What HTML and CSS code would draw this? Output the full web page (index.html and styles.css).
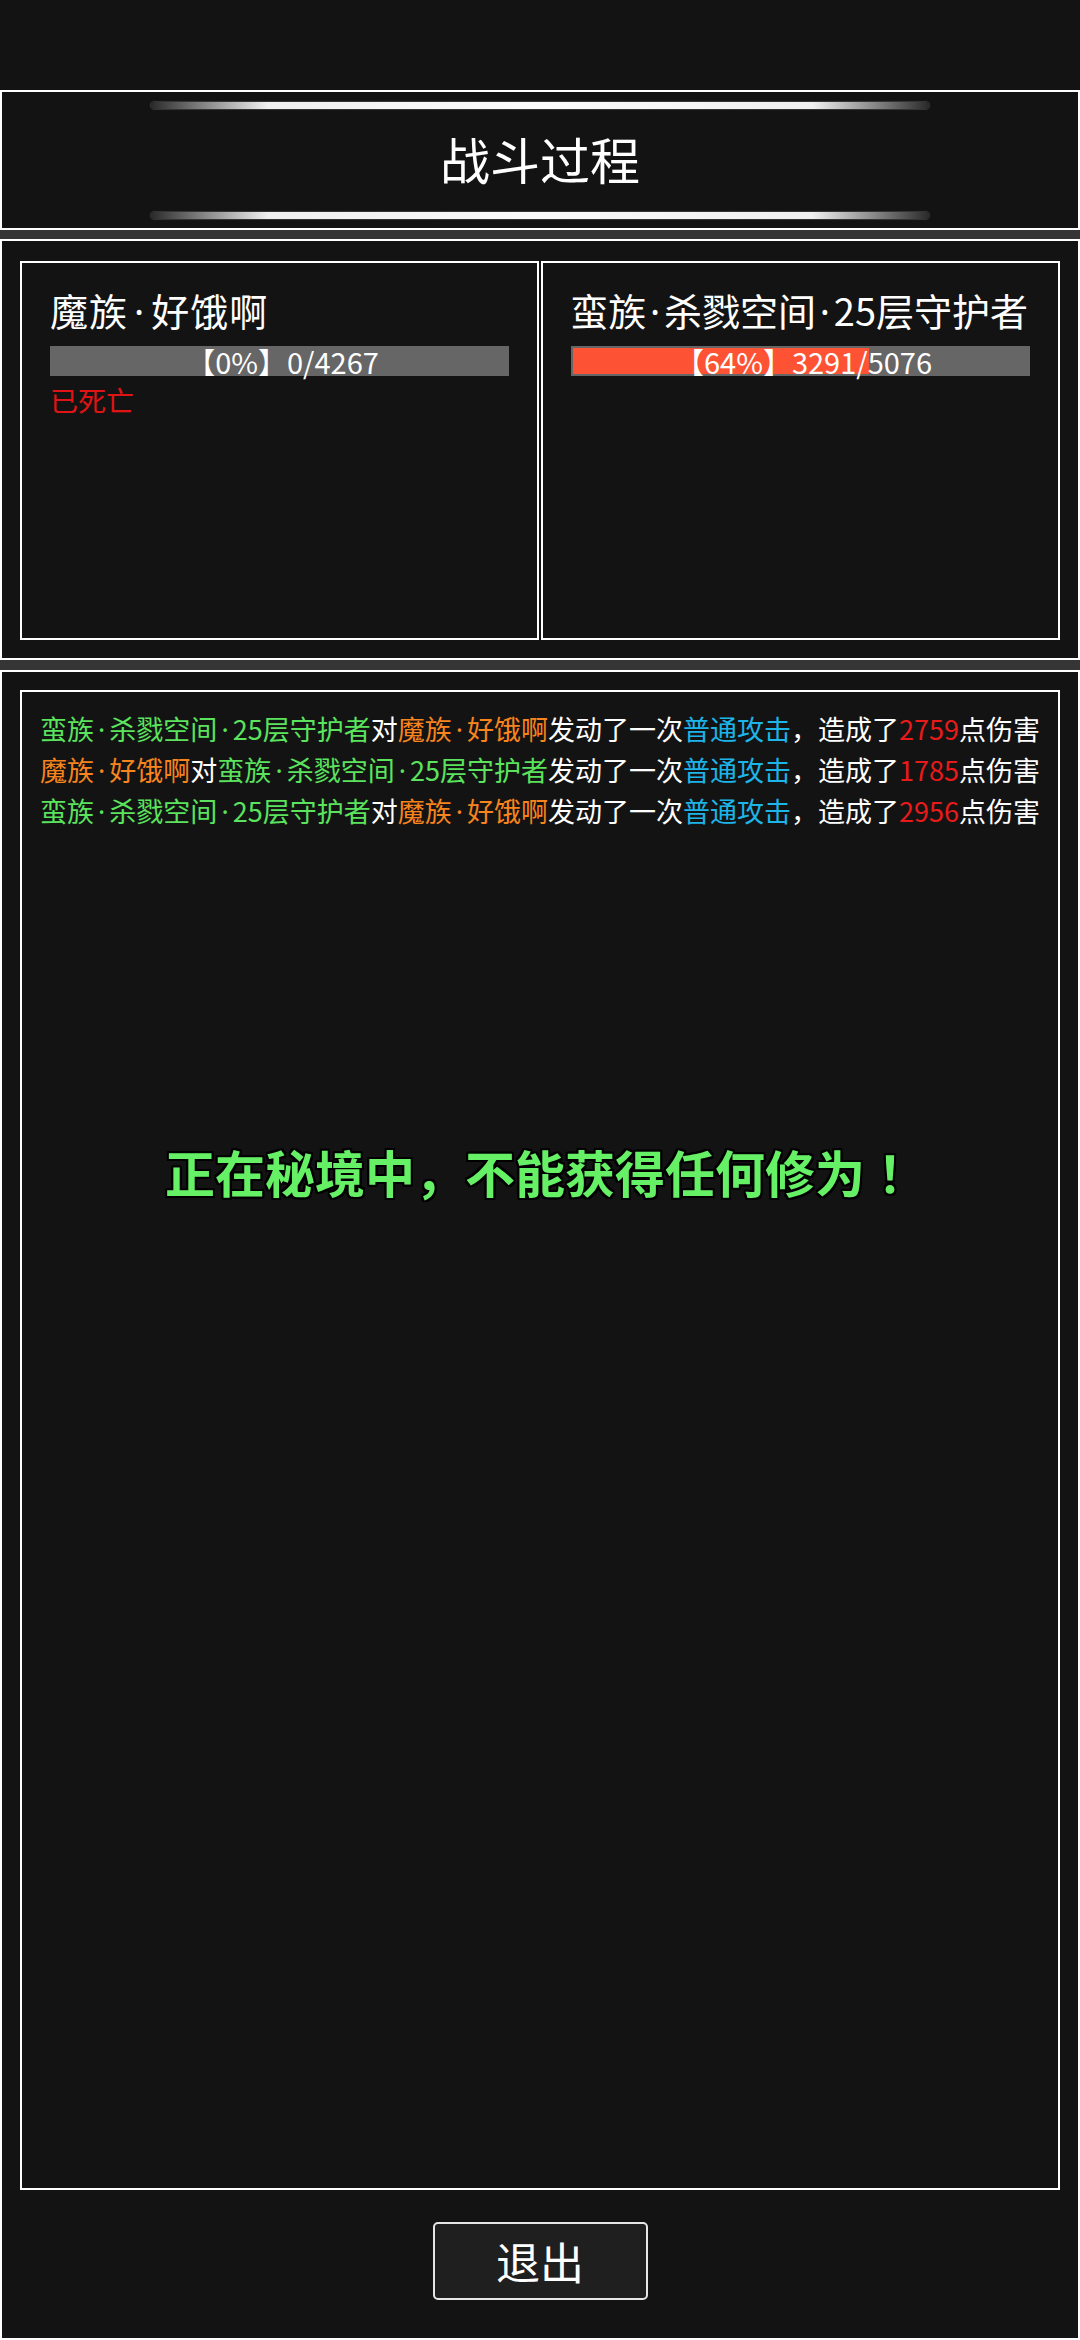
FILE: index.html
```html
<!DOCTYPE html>
<html lang="zh-CN">
<head>
<meta charset="utf-8">
<title>战斗过程</title>
<link rel="stylesheet" href="styles.css">
</head>
<body>
<div class="page">
  <div class="status"></div>

  <header class="header">
    <div class="glow"></div>
    <h1 class="title">战斗过程</h1>
    <div class="glow"></div>
  </header>

  <section class="fighters">
    <div class="fighter">
      <div class="fname self">魔族<span class="dot">·</span>好饿啊</div>
      <div class="bar">
        <div class="fill" style="width:0%"></div>
        <div class="bar-label">【0%】0/4267</div>
      </div>
      <div class="dead">已死亡</div>
    </div>
    <div class="fighter enemy">
      <div class="fname">蛮族<span class="dot">·</span>杀戮空间<span class="dot">·</span>25层守护者</div>
      <div class="bar">
        <div class="fill" style="width:64.4%"></div>
        <div class="bar-label">【64%】3291/5076</div>
      </div>
    </div>
  </section>

  <section class="battle">
    <div class="log">
      <p class="line"><span class="g">蛮族<span class="dot">·</span>杀戮空间<span class="dot">·</span>25层守护者</span>对<span class="o">魔族<span class="dot">·</span>好饿啊</span>发动了一次<span class="b">普通攻击</span>，造成了<span class="r">2759</span>点伤害</p>
      <p class="line"><span class="o">魔族<span class="dot">·</span>好饿啊</span>对<span class="g">蛮族<span class="dot">·</span>杀戮空间<span class="dot">·</span>25层守护者</span>发动了一次<span class="b">普通攻击</span>，造成了<span class="r">1785</span>点伤害</p>
      <p class="line"><span class="g">蛮族<span class="dot">·</span>杀戮空间<span class="dot">·</span>25层守护者</span>对<span class="o">魔族<span class="dot">·</span>好饿啊</span>发动了一次<span class="b">普通攻击</span>，造成了<span class="r">2956</span>点伤害</p>
    </div>
    <div class="actions">
      <button class="exit">退出</button>
    </div>
    <div class="toast">正在秘境中，不能获得任何修为<span class="bang" lang="zh-TW">！</span></div>
  </section>
</div>
</body>
</html>
```

FILE: styles.css
```css
* { box-sizing: border-box; }

html, body {
  margin: 0;
  padding: 0;
}

body {
  background: #353535;
  color: #fff;
  font-family: "Noto Sans CJK SC", "Noto Sans", sans-serif;
}

.page {
  width: 1080px;
  height: 2340px;
  display: flex;
  flex-direction: column;
  overflow: hidden;
}

.status {
  height: 90px;
  background: #131313;
  flex: none;
}

.header {
  flex: none;
  height: 140px;
  background: #131313;
  border: 2px solid #fff;
  padding: 10px 0 9px;
  display: flex;
  flex-direction: column;
  align-items: center;
  justify-content: space-between;
  margin-bottom: 9px;
}

.glow {
  width: 778px;
  height: 7px;
  border-radius: 4px;
  background: linear-gradient(to right, #2a2a2a 0%, #888 7%, #f0f0f0 15%, #fafafa 50%, #f0f0f0 85%, #888 93%, #2a2a2a 100%);
  box-shadow: 0 0 1px 1px rgba(80, 80, 80, 0.6);
}

.title {
  margin: 0 0 6px;
  font-size: 50px;
  font-weight: 400;
  line-height: 60px;
  color: #fff;
}

.dot {
  font-family: "Noto Sans", sans-serif;
  padding: 0 0.1em;
}

.fighters {
  flex: none;
  height: 421px;
  background: #131313;
  border: 2px solid #fff;
  padding: 20px 18px 18px;
  display: grid;
  grid-template-columns: minmax(0, 1fr) minmax(0, 1fr);
  column-gap: 2px;
  margin-bottom: 10px;
}

.fighter {
  border: 2px solid #fff;
  padding: 23px 28px 0;
  display: flex;
  flex-direction: column;
  align-items: flex-start;
  min-width: 0;
}

.fighter.enemy {
  align-items: flex-end;
}

.fname {
  font-size: 38px;
  line-height: 48px;
  color: #fff;
  white-space: nowrap;
}

.fname.self {
  letter-spacing: 1px;
}

.fname.self .dot {
  padding: 0 0.16em;
}

.enemy .fname {
  margin-right: 2px;
}

.bar {
  margin-top: 11px;
  width: 100%;
  height: 30px;
  background: #666;
  display: grid;
  grid-template-areas: "stack";
  align-items: stretch;
}

.fill {
  grid-area: stack;
  margin: 2px;
  background: #fd5233;
}

.bar-label {
  grid-area: stack;
  text-align: center;
  font-size: 29px;
  line-height: 30px;
  color: #fff;
  white-space: nowrap;
  padding-left: 6px;
}

.dead {
  margin-top: 6px;
  font-size: 28px;
  line-height: 36px;
  color: #e01414;
}

.battle {
  flex: 1;
  position: relative;
  background: #131313;
  border: 2px solid #fff;
  padding: 18px 18px 0;
  display: flex;
  flex-direction: column;
}

.log {
  height: 1500px;
  flex: none;
  border: 2px solid #fff;
  padding: 17px 10px 0 18px;
}

.line {
  margin: 0;
  font-size: 27px;
  line-height: 40px;
  color: #fff;
  white-space: nowrap;
}

.line .dot {
  padding: 0 0.15em;
}

.g { color: #5be35d; }
.o { color: #f7841d; }
.b { color: #1db4e8; }
.r { color: #e81a1a; }

.actions {
  display: flex;
  justify-content: center;
  padding-top: 32px;
}

.exit {
  width: 215px;
  height: 78px;
  background: #1f1f1f;
  border: 2px solid #e6e6e6;
  border-radius: 5px;
  color: #fff;
  font-family: "Noto Sans CJK SC", sans-serif;
  font-size: 44px;
  line-height: 1;
  padding: 0;
}

.toast {
  position: absolute;
  left: 0;
  right: 0;
  top: 469px;
  text-align: center;
  font-size: 50px;
  line-height: 60px;
  font-weight: 700;
  color: #66f066;
  text-shadow: -2px -2px 0 #000, 2px -2px 0 #000, -2px 2px 0 #000, 2px 2px 0 #000, 0 2px 0 #000, 0 -2px 0 #000, 2px 0 0 #000, -2px 0 0 #000;
  white-space: nowrap;
}

.bang {
  font-family: "Noto Sans CJK TC", "Noto Sans CJK SC", sans-serif;
}
```
